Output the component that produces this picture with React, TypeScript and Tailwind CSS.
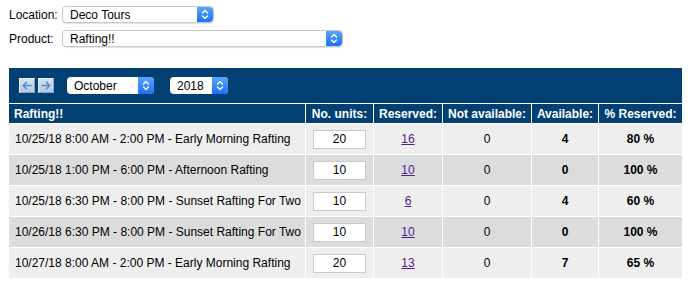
import React from "react";

const ROWS = [
  { label: "10/25/18 8:00 AM - 2:00 PM - Early Morning Rafting", units: 20, reserved: 16, na: 0, avail: 4, pct: "80 %" },
  { label: "10/25/18 1:00 PM - 6:00 PM - Afternoon Rafting", units: 10, reserved: 10, na: 0, avail: 0, pct: "100 %" },
  { label: "10/25/18 6:30 PM - 8:00 PM - Sunset Rafting For Two", units: 10, reserved: 6, na: 0, avail: 4, pct: "60 %" },
  { label: "10/26/18 6:30 PM - 8:00 PM - Sunset Rafting For Two", units: 10, reserved: 10, na: 0, avail: 0, pct: "100 %" },
  { label: "10/27/18 8:00 AM - 2:00 PM - Early Morning Rafting", units: 20, reserved: 13, na: 0, avail: 7, pct: "65 %" },
];

function Chevrons() {
  return (
    <svg width="8" height="11" viewBox="0 0 8 11" fill="none" stroke="white" strokeWidth="1.4" strokeLinecap="round" strokeLinejoin="round">
      <path d="M1.5 4 L4 1.5 L6.5 4" />
      <path d="M1.5 7 L4 9.5 L6.5 7" />
    </svg>
  );
}

function MacSelect({ value, width, shadow }: { value: string; width: string; shadow?: boolean }) {
  return (
    <div
      className={`flex h-[17px] items-stretch rounded-[4px] bg-white ${width} ${
        shadow ? "border border-[#c8c8c8] shadow-[0_1px_1px_rgba(0,0,0,0.12)]" : ""
      }`}
    >
      <div className="flex flex-1 items-center pl-[7px] text-[12px] leading-none text-black">{value}</div>
      <div className="flex w-[16px] items-center justify-center rounded-r-[4px] bg-gradient-to-b from-[#5aa5fb] to-[#1b6ff3]">
        <Chevrons />
      </div>
    </div>
  );
}

function ArrowBtn({ dir }: { dir: "l" | "r" }) {
  return (
    <div className="flex h-[15px] w-[16px] items-center justify-center border border-[#e8f0fa] border-b-[#8aa6cc] border-r-[#8aa6cc] bg-gradient-to-b from-[#d3e1f3] to-[#b3cae9]">
      <svg width="10" height="9" viewBox="0 0 10 9" fill="none" stroke="#5d88c4" strokeWidth="1.6" strokeLinecap="round" strokeLinejoin="round">
        {dir === "l" ? (
          <>
            <path d="M9 4.5 H1.5" />
            <path d="M4.5 1.2 L1.3 4.5 L4.5 7.8" />
          </>
        ) : (
          <>
            <path d="M1 4.5 H8.5" />
            <path d="M5.5 1.2 L8.7 4.5 L5.5 7.8" />
          </>
        )}
      </svg>
    </div>
  );
}

const cols = "grid grid-cols-[296px_67px_68px_88px_66px_83px] gap-x-px";

export default function App() {
  return (
    <div className="min-h-screen bg-white pl-[9px] pt-[6px] font-['Liberation_Sans',Arial,sans-serif] text-[12px] text-black">
      <div className="flex flex-col gap-[7px]">
        <div className="flex h-[17px] items-center">
          <span className="w-[53px]">Location:</span>
          <MacSelect value="Deco Tours" width="w-[152px]" shadow />
        </div>
        <div className="flex h-[17px] items-center">
          <span className="w-[53px]">Product:</span>
          <MacSelect value="Rafting!!" width="w-[281px]" shadow />
        </div>
      </div>

      <div className="mt-[21px] flex w-[673px] flex-col gap-y-px bg-white">
        <div className="flex h-[35px] items-center bg-[#023f73] pl-[10px]">
          <div className="flex gap-[3px]">
            <ArrowBtn dir="l" />
            <ArrowBtn dir="r" />
          </div>
          <div className="ml-[13px]">
            <MacSelect value="October" width="w-[87px]" />
          </div>
          <div className="ml-[16px]">
            <MacSelect value="2018" width="w-[58px]" />
          </div>
        </div>

        <div className={`${cols} h-[19px] font-bold text-white`}>
          <div className="flex items-center bg-[#023f73] pl-[5px]">Rafting!!</div>
          <div className="flex items-center justify-center bg-[#023f73]">No. units:</div>
          <div className="flex items-center justify-center bg-[#023f73]">Reserved:</div>
          <div className="flex items-center justify-center bg-[#023f73]">Not available:</div>
          <div className="flex items-center justify-center bg-[#023f73]">Available:</div>
          <div className="flex items-center justify-center bg-[#023f73]">% Reserved:</div>
        </div>

        {ROWS.map((r, i) => {
          const bg = i % 2 === 0 ? "bg-[#eeeeee]" : "bg-[#dcdcdc]";
          return (
            <div key={i} className={`${cols} h-[30px]`}>
              <div className={`flex items-center pl-[6px] ${bg}`}>{r.label}</div>
              <div className={`flex items-center justify-center ${bg}`}>
                <div className="flex h-[19px] w-[53px] items-center justify-center border border-[#c9c9c9] bg-white">
                  {r.units}
                </div>
              </div>
              <div className={`flex items-center justify-center ${bg}`}>
                <a className="text-[#551a8b] underline">{r.reserved}</a>
              </div>
              <div className={`flex items-center justify-center ${bg}`}>{r.na}</div>
              <div className={`flex items-center justify-center font-bold ${bg}`}>{r.avail}</div>
              <div className={`flex items-center justify-center font-bold ${bg}`}>{r.pct}</div>
            </div>
          );
        })}
      </div>
    </div>
  );
}
